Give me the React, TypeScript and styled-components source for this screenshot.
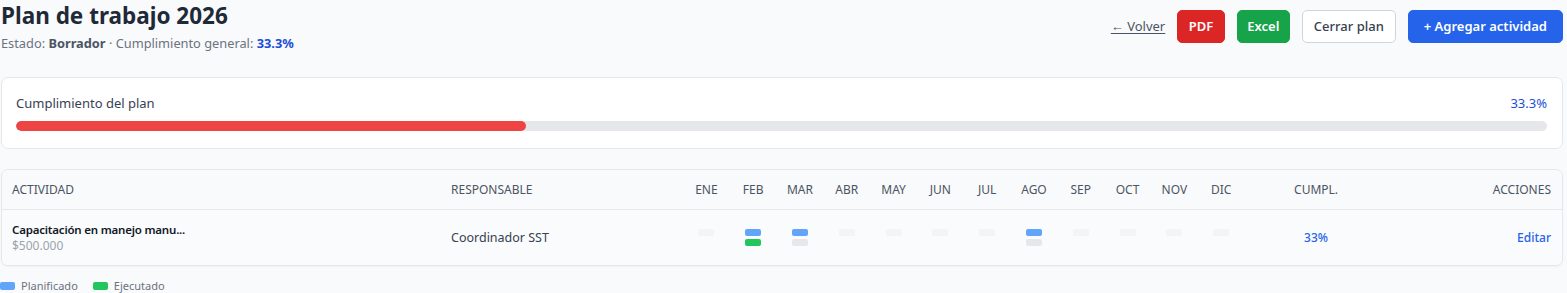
import React from "react";
import styled, { createGlobalStyle } from "styled-components";

const GlobalStyle = createGlobalStyle`
  * { box-sizing: border-box; }
  body {
    margin: 0;
    background: #f9fafb;
    font-family: "Noto Sans", "Open Sans", sans-serif;
    color: #1f2937;
  }
`;

const Page = styled.div`
  padding: 0 4px 0 1px;
`;

const Header = styled.header`
  display: flex;
  justify-content: space-between;
  align-items: center;
  margin-bottom: 25px;
`;

const TitleBlock = styled.div`
  padding-top: 1px;
`;

const Title = styled.h1`
  margin: 0;
  font-size: 22.5px;
  line-height: 30px;
  font-weight: 700;
  color: #1f2937;
`;

const Subtitle = styled.p`
  margin: 3px 0 0;
  font-size: 12.8px;
  line-height: 18px;
  color: #6b7280;

  & strong {
    font-weight: 700;
    color: #4b5563;
  }
  & em {
    font-style: normal;
    font-weight: 700;
    color: #1d4ed8;
  }
`;

const Actions = styled.div`
  display: flex;
  align-items: center;
  gap: 12px;
`;

const BackLink = styled.a`
  font-size: 13px;
  color: #4b5563;
  text-decoration: underline;
  text-underline-offset: 2px;
  cursor: pointer;
`;

const variants = {
  red: { bg: "#dc2626", border: "#dc2626", color: "#fff", weight: 600, pad: 10.5 },
  green: { bg: "#16a34a", border: "#16a34a", color: "#fff", weight: 600, pad: 9.5 },
  outline: { bg: "#fff", border: "#d1d5db", color: "#374151", weight: 500, pad: 11 },
  blue: { bg: "#2563eb", border: "#2563eb", color: "#fff", weight: 600, pad: 15 },
};

type Variant = keyof typeof variants;

const Button = styled.button<{ $variant: Variant }>`
  height: 33px;
  padding: 0 ${(p) => variants[p.$variant].pad}px;
  border-radius: 5px;
  border: 1px solid ${(p) => variants[p.$variant].border};
  background: ${(p) => variants[p.$variant].bg};
  color: ${(p) => variants[p.$variant].color};
  font-family: inherit;
  font-size: 13px;
  font-weight: ${(p) => variants[p.$variant].weight};
  cursor: pointer;
`;

const Card = styled.section`
  background: #fff;
  border: 1px solid #e5e7eb;
  border-radius: 7px;
  padding: 15px 15px 17px 14px;
  margin-bottom: 20px;
`;

const ProgressHead = styled.div`
  display: flex;
  justify-content: space-between;
  align-items: center;
  height: 20px;
  margin-bottom: 8px;
  font-size: 13px;
  color: #374151;

  & span:last-child {
    color: #1d4ed8;
  }
`;

const Track = styled.div`
  height: 10px;
  border-radius: 999px;
  background: #e5e7eb;
  overflow: hidden;
`;

const Fill = styled.div`
  height: 100%;
  border-radius: 999px;
  background: #ef4444;
`;

const TableCard = styled.section`
  border: 1px solid #e5e7eb;
  border-radius: 7px;
  background: #fafbfc;
  box-shadow: 0 1px 2px rgba(0, 0, 0, 0.04);
  overflow: hidden;
`;

const GridRow = styled.div<{ $head?: boolean }>`
  display: grid;
  grid-template-columns: 439px 242px repeat(12, 46.8px) 143px 1fr;
  align-items: center;
  height: ${(p) => (p.$head ? "40px" : "55px")};
  background: ${(p) => (p.$head ? "#f9fafb" : "#fafbfc")};
  border-bottom: ${(p) => (p.$head ? "1px solid #e5e7eb" : "none")};
`;

const HeadCell = styled.div<{ $align?: "left" | "center" | "right" }>`
  padding: 0 ${(p) => (p.$align === "right" ? "11px" : "0")} 0 ${(p) => (p.$align === "left" ? "10px" : "0")};
  text-align: ${(p) => p.$align || "center"};
  font-size: 12px;
  color: #4b5563;
  text-transform: uppercase;
`;

const ActivityCell = styled.div`
  padding-left: 10px;
  line-height: 16px;
`;

const ActivityName = styled.div`
  font-size: 11.5px;
  font-weight: 600;
  letter-spacing: -0.2px;
  color: #111827;
`;

const Cost = styled.div`
  font-size: 12px;
  color: #9ca3af;
`;

const TextCell = styled.div`
  padding-left: 10px;
  font-size: 12.5px;
  color: #374151;
`;

const MonthCell = styled.div`
  display: flex;
  justify-content: center;
`;

const BarStack = styled.div`
  display: flex;
  flex-direction: column;
  gap: 3px;
  height: 17px;
`;

const Bar = styled.div<{ $color: string }>`
  width: 16px;
  height: 7px;
  border-radius: 2px;
  background: ${(p) => p.$color};
`;

const Percent = styled.div`
  text-align: center;
  font-size: 12px;
  font-weight: 500;
  color: #2563eb;
`;

const EditCell = styled.div`
  text-align: right;
  padding-right: 11px;
  font-size: 12px;
  font-weight: 500;
  color: #2563eb;
  cursor: pointer;
`;

const Legend = styled.div`
  display: flex;
  align-items: center;
  gap: 15px;
  margin: 12px 0 0 -1px;
  font-size: 11px;
  line-height: 16px;
  color: #6b7280;
`;

const LegendItem = styled.span`
  display: flex;
  align-items: center;
  gap: 6px;
`;

const Swatch = styled.span<{ $color: string }>`
  width: 15px;
  height: 8px;
  border-radius: 2px;
  background: ${(p) => p.$color};
`;

const MONTHS = ["ENE", "FEB", "MAR", "ABR", "MAY", "JUN", "JUL", "AGO", "SEP", "OCT", "NOV", "DIC"];

const COLORS = {
  planned: "#60a5fa",
  done: "#22c55e",
  pending: "#e5e7eb",
  empty: "#f3f4f6",
};

// planned months and which of them were executed
const activity = {
  name: "Capacitación en manejo manu...",
  cost: "$500.000",
  owner: "Coordinador SST",
  planned: [1, 2, 7],
  executed: [1],
  progress: 33,
};

export default function App() {
  const progress = 33.3;

  return (
    <>
      <GlobalStyle />
      <Page>
        <Header>
          <TitleBlock>
            <Title>Plan de trabajo 2026</Title>
            <Subtitle>
              Estado: <strong>Borrador</strong> · Cumplimiento general: <em>33.3%</em>
            </Subtitle>
          </TitleBlock>
          <Actions>
            <BackLink>← Volver</BackLink>
            <Button $variant="red">PDF</Button>
            <Button $variant="green">Excel</Button>
            <Button $variant="outline">Cerrar plan</Button>
            <Button $variant="blue">+ Agregar actividad</Button>
          </Actions>
        </Header>

        <Card>
          <ProgressHead>
            <span>Cumplimiento del plan</span>
            <span>{progress}%</span>
          </ProgressHead>
          <Track>
            <Fill style={{ width: `${progress}%` }} />
          </Track>
        </Card>

        <TableCard>
          <GridRow $head>
            <HeadCell $align="left">Actividad</HeadCell>
            <HeadCell $align="left">Responsable</HeadCell>
            {MONTHS.map((m) => (
              <HeadCell key={m}>{m}</HeadCell>
            ))}
            <HeadCell>Cumpl.</HeadCell>
            <HeadCell $align="right">Acciones</HeadCell>
          </GridRow>
          <GridRow>
            <ActivityCell>
              <ActivityName>{activity.name}</ActivityName>
              <Cost>{activity.cost}</Cost>
            </ActivityCell>
            <TextCell>{activity.owner}</TextCell>
            {MONTHS.map((m, i) => {
              const planned = activity.planned.includes(i);
              const done = activity.executed.includes(i);
              return (
                <MonthCell key={m}>
                  <BarStack>
                    <Bar $color={planned ? COLORS.planned : COLORS.empty} />
                    {planned && <Bar $color={done ? COLORS.done : COLORS.pending} />}
                  </BarStack>
                </MonthCell>
              );
            })}
            <Percent>{activity.progress}%</Percent>
            <EditCell>Editar</EditCell>
          </GridRow>
        </TableCard>

        <Legend>
          <LegendItem>
            <Swatch $color={COLORS.planned} />
            Planificado
          </LegendItem>
          <LegendItem>
            <Swatch $color={COLORS.done} />
            Ejecutado
          </LegendItem>
        </Legend>
      </Page>
    </>
  );
}
